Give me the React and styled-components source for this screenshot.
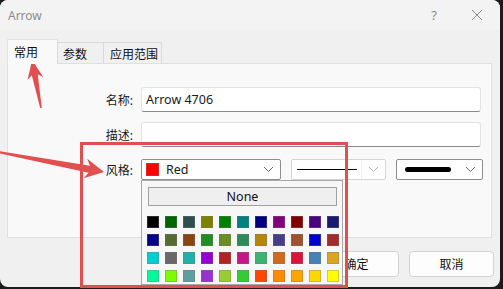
import React from "react";
import styled, { createGlobalStyle } from "styled-components";

const Global = createGlobalStyle`
  html, body { margin: 0; padding: 0; background: #1c1c1c; }
  body { width: 503px; height: 289px; overflow: hidden; }
  * { box-sizing: border-box; }
`;

const FONT = `"Segoe UI", "Noto Sans", "Noto Sans CJK SC", sans-serif`;

const Window = styled.div`
  position: relative;
  width: 500px;
  height: 287px;
  border-radius: 8px;
  overflow: hidden;
  background: #f0f0f0;
  font-family: ${FONT};
  font-size: 12px;
  color: #1a1a1a;
`;

const TitleBar = styled.div`
  height: 30px;
  display: flex;
  align-items: center;
  padding: 0 0 0 8px;
  background: #f3f3f3;
  color: #8c8c8c;
  font-size: 12px;
`;

const Title = styled.div`
  flex: 1;
`;

const TitleBtn = styled.div`
  width: ${(p) => p.$w}px;
  display: flex;
  justify-content: center;
  align-items: center;
  color: #8c8c8c;
  font-size: 13px;
`;

const Body = styled.div`
  padding: 9px 0 0 7px;
`;

const Tabs = styled.div`
  display: flex;
  align-items: flex-end;
  height: 24px;
  position: relative;
  z-index: 1;
`;

const Tab = styled.div`
  height: ${(p) => (p.$active ? 25 : 21)}px;
  width: ${(p) => p.$w}px;
  margin-left: ${(p) => (p.$first ? 0 : -1)}px;
  padding-left: ${(p) => p.$pad}px;
  padding-top: ${(p) => (p.$active ? 0 : 2)}px;
  display: flex;
  align-items: center;
  background: ${(p) => (p.$active ? "#f9f9f9" : "#f0f0f0")};
  border: 1px solid ${(p) => (p.$active ? "#e2e2e2" : "#dadada")};
  border-bottom: none;
  margin-bottom: ${(p) => (p.$active ? -1 : 0)}px;
  color: #111;
`;

const Panel = styled.div`
  width: 485px;
  height: 175px;
  border: 1px solid #e0e0e0;
  background: #f9f9f9;
  padding-top: 23px;
`;

const Row = styled.div`
  display: grid;
  grid-template-columns: 125px auto;
  column-gap: 8px;
  align-items: center;
  height: ${(p) => p.$h}px;
  margin-bottom: ${(p) => p.$mb}px;
`;

const Label = styled.div`
  text-align: right;
  color: #1a1a1a;
`;

const Input = styled.div`
  width: 340px;
  height: 25px;
  background: #ffffff;
  border: 1px solid #e3e3e3;
  border-bottom: 1px solid #8a8a8a;
  border-radius: 3px;
  padding: 0 0 0 4px;
  display: flex;
  align-items: center;
  font-size: 12.5px;
`;

const SelectRow = styled.div`
  display: flex;
  gap: 10px;
`;

const Select = styled.div`
  width: ${(p) => p.$w}px;
  height: 21px;
  background: #ffffff;
  border: 1px solid ${(p) => (p.$disabled ? "#d6d6d6" : "#8e8e8e")};
  border-radius: 2px;
  display: flex;
  align-items: center;
  padding: 0 6px 0 4px;
`;

const Swatch = styled.div`
  width: ${(p) => p.$s}px;
  height: ${(p) => p.$s}px;
  background: ${(p) => p.$c};
  box-shadow: inset 0 0 0 1px rgba(120, 120, 120, 0.35);
  flex: none;
`;

const SelectText = styled.div`
  flex: 1;
  margin-left: 7px;
  font-size: 12.5px;
`;

const LineArea = styled.div`
  flex: 1;
  height: 100%;
  display: flex;
  align-items: center;
  padding-right: ${(p) => p.$pr}px;
  padding-left: ${(p) => p.$pl}px;
  border-right: ${(p) => (p.$sep ? "1px solid #f0f0f0" : "none")};
`;

const Line = styled.div`
  width: 100%;
  height: ${(p) => p.$t}px;
  border-radius: ${(p) => p.$t / 2}px;
  background: #000;
`;

const Chevron = ({ color = "#666" }) => (
  <svg width="11" height="7" viewBox="0 0 11 7" style={{ marginLeft: 6 }}>
    <path d="M1 1 L5.5 5.5 L10 1" fill="none" stroke={color} strokeWidth="1" />
  </svg>
);

const Footer = styled.div`
  display: flex;
  justify-content: flex-end;
  gap: 10px;
  margin-top: 13px;
  padding-right: 6px;
`;

const Button = styled.div`
  width: 85px;
  height: 26px;
  background: #fdfdfd;
  border: 1px solid #d3d3d3;
  border-radius: 4px;
  display: flex;
  align-items: center;
  justify-content: center;
  color: #111;
`;

const Popup = styled.div`
  position: absolute;
  left: 141px;
  top: 180px;
  width: 202px;
  height: 105px;
  background: #f7f7f7;
  border: 1px solid #a8a8a8;
  padding: 6px 0 0 4px;
`;

const NoneButton = styled.div`
  width: 189px;
  height: 19px;
  margin-left: 2px;
  background: #efefef;
  border: 1px solid #a0a0a0;
  display: flex;
  align-items: center;
  justify-content: center;
  font-size: 12.5px;
  color: #111;
`;

const Grid = styled.div`
  display: grid;
  grid-template-columns: repeat(11, 12px);
  grid-auto-rows: 12px;
  column-gap: 6px;
  row-gap: 6px;
  margin-top: 10px;
  margin-left: 1px;
`;

const Overlay = styled.svg`
  position: absolute;
  left: 0;
  top: 0;
  pointer-events: none;
`;

const COLORS = [
  "black", "darkgreen", "darkslategray", "olive", "green", "teal", "navy", "purple", "maroon", "indigo", "midnightblue",
  "darkblue", "darkolivegreen", "saddlebrown", "forestgreen", "olivedrab", "seagreen", "darkgoldenrod", "darkslateblue", "sienna", "mediumblue", "brown",
  "darkturquoise", "dimgray", "lightseagreen", "darkviolet", "firebrick", "mediumvioletred", "mediumseagreen", "chocolate", "crimson", "steelblue", "goldenrod",
  "mediumspringgreen", "lawngreen", "cadetblue", "darkorchid", "yellowgreen", "limegreen", "orangered", "darkorange", "orange", "gold", "yellow",
];

function arrowPoints(tail, tip, headLen, headHalf, neckHalf, tailHalf) {
  const dx = tip[0] - tail[0];
  const dy = tip[1] - tail[1];
  const len = Math.hypot(dx, dy);
  const ux = dx / len, uy = dy / len;
  const px = -uy, py = ux;
  const bx = tip[0] - ux * headLen, by = tip[1] - uy * headLen;
  const nx = tip[0] - ux * (headLen - 4), ny = tip[1] - uy * (headLen - 4);
  const pts = [
    [tail[0] + px * tailHalf, tail[1] + py * tailHalf],
    [nx + px * neckHalf, ny + py * neckHalf],
    [bx + px * headHalf, by + py * headHalf],
    tip,
    [bx - px * headHalf, by - py * headHalf],
    [nx - px * neckHalf, ny - py * neckHalf],
    [tail[0] - px * tailHalf, tail[1] - py * tailHalf],
  ];
  return pts.map((p) => p.map((v) => v.toFixed(1)).join(",")).join(" ");
}

export default function App() {
  const red = "#e14f4f";
  return (
    <>
      <Global />
      <Window>
        <TitleBar>
          <Title>Arrow</Title>
          <TitleBtn $w={46} style={{ marginRight: -3 }}>?</TitleBtn>
          <TitleBtn $w={46}>
            <svg width="12" height="12" viewBox="0 0 12 12">
              <path d="M1 1 L11 11 M11 1 L1 11" stroke="#8c8c8c" strokeWidth="1" />
            </svg>
          </TitleBtn>
        </TitleBar>
        <Body>
          <Tabs>
            <Tab $active $first $w={51} $pad={6}>常用</Tab>
            <Tab $w={47} $pad={5}>参数</Tab>
            <Tab $w={59} $pad={6}>应用范围</Tab>
          </Tabs>
          <Panel>
            <Row $h={25} $mb={10}>
              <Label>名称:</Label>
              <Input>Arrow 4706</Input>
            </Row>
            <Row $h={25} $mb={12}>
              <Label>描述:</Label>
              <Input />
            </Row>
            <Row $h={21} $mb={0}>
              <Label>风格:</Label>
              <SelectRow>
                <Select $w={140}>
                  <Swatch $c="#ff0000" $s={13} />
                  <SelectText>Red</SelectText>
                  <Chevron />
                </Select>
                <Select $w={95} $disabled>
                  <LineArea $pr={4} $pl={1} $sep>
                    <Line $t={1} />
                  </LineArea>
                  <Chevron color="#b0b0b0" />
                </Select>
                <Select $w={87}>
                  <LineArea $pr={8} $pl={4}>
                    <Line $t={5} />
                  </LineArea>
                  <Chevron />
                </Select>
              </SelectRow>
            </Row>
          </Panel>
          <Footer>
            <Button>确定</Button>
            <Button>取消</Button>
          </Footer>
        </Body>
        <Popup>
          <NoneButton>None</NoneButton>
          <Grid>
            {COLORS.map((c) => (
              <Swatch key={c} $c={c} $s={12} />
            ))}
          </Grid>
        </Popup>
      </Window>
      <Overlay width="503" height="289" viewBox="0 0 503 289">
        <rect x="81.5" y="143.5" width="265" height="143" fill="none" stroke={red} strokeWidth="3" />
        <polygon points={arrowPoints([41, 108], [32, 60], 19, 8, 3, 0.8)} fill={red} />
        <polygon points={arrowPoints([-2, 152], [104, 172], 19, 10, 3.5, 1)} fill={red} />
      </Overlay>
    </>
  );
}
